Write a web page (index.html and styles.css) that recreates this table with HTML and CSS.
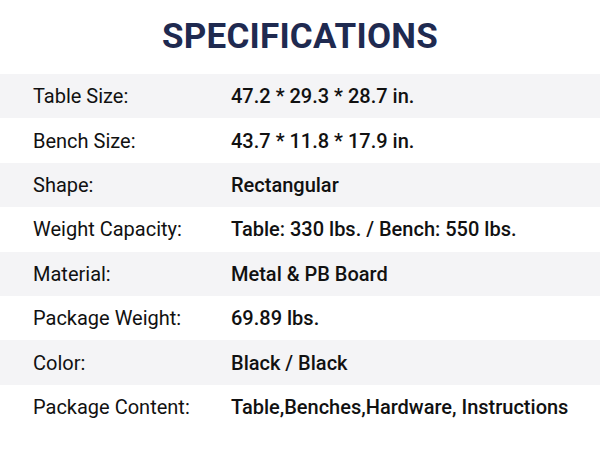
FILE: index.html
```html
<!DOCTYPE html>
<html>
<head>
<meta charset="utf-8">
<link rel="stylesheet" href="styles.css">
</head>
<body>
<div class="page">
  <h1 class="title">SPECIFICATIONS</h1>
  <div class="specs">
    <div class="row alt"><span class="label">Table Size:</span><span class="value">47.2 * 29.3 * 28.7 in.</span></div>
    <div class="row"><span class="label">Bench Size:</span><span class="value">43.7 * 11.8 * 17.9 in.</span></div>
    <div class="row alt"><span class="label">Shape:</span><span class="value">Rectangular</span></div>
    <div class="row"><span class="label">Weight Capacity:</span><span class="value">Table: 330 lbs. / Bench: 550 lbs.</span></div>
    <div class="row alt"><span class="label">Material:</span><span class="value">Metal &amp; PB Board</span></div>
    <div class="row"><span class="label">Package Weight:</span><span class="value">69.89 lbs.</span></div>
    <div class="row alt"><span class="label">Color:</span><span class="value">Black / Black</span></div>
    <div class="row"><span class="label">Package Content:</span><span class="value">Table,Benches,Hardware, Instructions</span></div>
  </div>
</div>
</body>
</html>
```
FILE: styles.css
```css
html, body {
  margin: 0;
  padding: 0;
  background: #ffffff;
}
.page {
  width: 600px;
  height: 450px;
  font-family: Roboto, "Liberation Sans", sans-serif;
  color: #111111;
}
.title {
  margin: 0;
  height: 74px;
  display: flex;
  align-items: center;
  justify-content: center;
  font-size: 35px;
  font-weight: 700;
  color: #1f2a50;
  letter-spacing: 0.2px;
  padding-bottom: 2px;
  box-sizing: border-box;
}
.specs {
  display: flex;
  flex-direction: column;
}
.row {
  height: 44.4px;
  display: flex;
  align-items: center;
  font-size: 20px;
}
.row.alt {
  background: #f4f4f6;
}
.label {
  width: 198px;
  padding-left: 33px;
  font-weight: 400;
}
.value {
  font-weight: 500;
}
```
